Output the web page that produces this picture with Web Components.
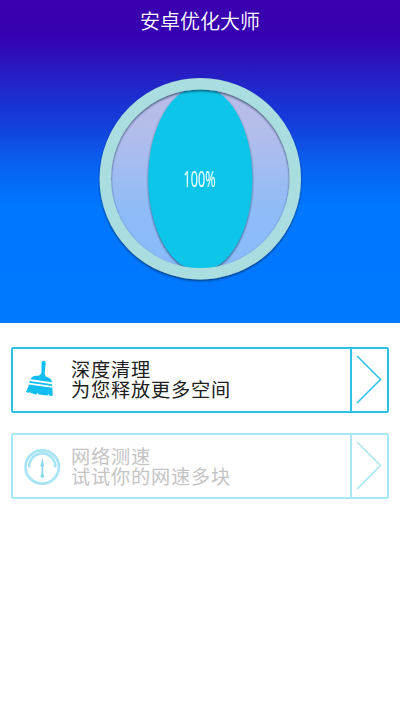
<!DOCTYPE html>
<html lang="zh-CN">
<head>
<meta charset="utf-8">
<title>安卓优化大师</title>
<style>
html,body{margin:0;height:100%;background:#fff}
body{font-family:"Liberation Sans","Noto Sans CJK SC",sans-serif;overflow:hidden}
</style>
</head>
<body>
<optimizer-app></optimizer-app>
<script>
const define = (name, html) => customElements.define(name, class extends HTMLElement {
  constructor() {
    super();
    const t = document.createElement('template');
    t.innerHTML = html;
    this.attachShadow({mode: 'open'}).append(t.content.cloneNode(true));
  }
});

define('memory-gauge', `
<style>
:host{display:grid;width:202px;height:202px;place-items:center}
svg,.label{grid-area:1/1}
svg{display:block;overflow:visible}
.label{position:relative;font:500 22.5px/24px "Open Sans",sans-serif;color:#f0ffff;-webkit-text-stroke:.2px #f0ffff;transform:scaleX(.56);white-space:nowrap;padding-bottom:1px}
</style>
<svg width="202" height="202" viewBox="-0.3 0.3 202 202">
  <defs>
    <linearGradient id="glass" x1="0" y1="0" x2="0" y2="1">
      <stop offset="0" stop-color="#babce8"/><stop offset=".25" stop-color="#b3bdeb"/><stop offset=".66" stop-color="#8fbcf7"/><stop offset="1" stop-color="#88bbfb"/>
    </linearGradient>
    <clipPath id="inner"><circle cx="101" cy="101" r="90"/></clipPath>
    <filter id="drop" x="-10%" y="-10%" width="120%" height="120%"><feDropShadow dx="0" dy="1.3" stdDeviation="1.2" flood-color="#00203c" flood-opacity=".75"/></filter>
  </defs>
  <circle cx="101" cy="101" r="90" fill="url(#glass)"/>
  <g clip-path="url(#inner)"><ellipse cx="101" cy="101" rx="52" ry="92.3" fill="#10c5e8" filter="url(#drop)"/></g>
  <circle cx="101" cy="101" r="95" fill="none" stroke="#aadde0" stroke-width="11.4" filter="url(#drop)"/>
</svg>
<div class="label"><slot></slot></div>`);

define('app-hero', `
<style>
:host{display:flex;flex-direction:column;align-items:center;height:323px;box-sizing:border-box;padding-top:6px;
background:linear-gradient(#3c00af 0,#3800b0 22px,#3600b3 35px,#2c14bd 62px,#2029cc 90px,#143fdd 125px,#0862f1 165px,#0077ff 205px,#0078ff 100%)}
h1{margin:0 0 42px;font-family:"Noto Sans CJK SC",sans-serif;font-size:20px;line-height:29px;font-weight:350;color:#fff;height:30px}
</style>
<h1><slot name="title"></slot></h1><slot></slot>`);

define('action-card', `
<style>
:host{--line:#2bc2e8;display:grid;grid-template-columns:58px 1fr 37px;box-sizing:border-box;width:378px;height:66px;border:2px solid var(--line);border-radius:2px;color:#202020}
:host([dim]){--line:#a9e6f3;color:#c4c4c4}
.icon{display:flex}
.copy{display:grid;grid-template-rows:20px 20px;align-content:start;font-size:19.2px;letter-spacing:.8px;line-height:20px;padding-top:12px;white-space:nowrap}
:host([dim]) .copy{padding-top:13px}
.go{border-left:2px solid var(--line);display:flex}
svg{display:block}
</style>
<div class="icon"><slot name="icon"></slot></div>
<div class="copy"><div><slot name="title"></slot></div><div><slot></slot></div></div>
<div class="go"><svg width="35" height="62" viewBox="0 0 35 62"><path d="M5 7 28.5 30.5 5 54" fill="none" stroke="var(--line)" stroke-width="1.5"/></svg></div>`);

define('broom-icon', `
<style>:host{display:block}svg{display:block}</style>
<svg width="58" height="62" viewBox="13 349 58 62" fill="#12bdf2">
<path d="M41.5 363Q41.5 360.7 43.7 360.7Q45.8 360.7 45.7 363L44.7 372.5Q44.7 376.6 47.5 377.2Q51.5 378.2 52 382.3L30.5 379.2Q32 375.9 36 375.8Q40.5 376.2 41.5 372.5Z"/>
<path d="M29.6 381 52.2 384.3 52.1 386 29.2 382.7Z"/>
<path d="M28.8 384.6 52.4 387.7 52.7 396 48.8 395.5 48.5 393.7 47.6 395.5 38.5 394.6 38 392.4 36.5 394.5 30.3 393 30.2 391.3 28.7 393.1 26 392Q28.1 388.5 28.8 384.6Z"/>
</svg>`);

define('speed-icon', `
<style>:host{display:block}svg{display:block}</style>
<svg width="58" height="62" viewBox="13 435 58 62" fill="none" stroke="#a7e4f4">
<circle cx="42.2" cy="467" r="16.7" stroke-width="2.7"/>
<path d="M29.3 467.5A13 13 0 1 1 55.2 467.5" stroke-width="2.6"/>
<path d="M42.3 458.5 44.2 466 43.2 466.5 43.3 475H41.3L41.5 466.5 40.4 466Z" fill="#8cd9ec" stroke="none"/><circle cx="42.3" cy="476" r="1.9" fill="#8cd9ec" stroke="none"/>
</svg>`);

define('optimizer-app', `
<style>
:host{display:block;width:400px;height:711px;background:#fff}
main{display:grid;gap:20px;padding:24px 0 0 11px}
</style>
<app-hero><span slot="title">安卓优化大师</span><memory-gauge>100%</memory-gauge></app-hero>
<main>
<action-card><broom-icon slot="icon"></broom-icon><span slot="title">深度清理</span>为您释放更多空间</action-card>
<action-card dim><speed-icon slot="icon"></speed-icon><span slot="title">网络测速</span>试试你的网速多块</action-card>
</main>`);
</script>
</body>
</html>
